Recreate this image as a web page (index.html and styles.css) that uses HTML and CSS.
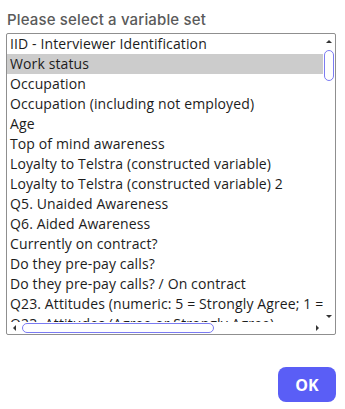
FILE: index.html
```html
<!DOCTYPE html>
<html>
<head>
<meta charset="utf-8">
<link rel="stylesheet" href="styles.css">
</head>
<body>
<div class="dialog">
  <div class="title">Please select a variable set</div>
  <div class="listbox">
    <div class="items">
      <div class="item">IID - Interviewer Identification</div>
      <div class="item selected">Work status</div>
      <div class="item">Occupation</div>
      <div class="item">Occupation (including not employed)</div>
      <div class="item">Age</div>
      <div class="item">Top of mind awareness</div>
      <div class="item">Loyalty to Telstra (constructed variable)</div>
      <div class="item">Loyalty to Telstra (constructed variable) 2</div>
      <div class="item">Q5. Unaided Awareness</div>
      <div class="item">Q6. Aided Awareness</div>
      <div class="item">Currently on contract?</div>
      <div class="item">Do they pre-pay calls?</div>
      <div class="item">Do they pre-pay calls? / On contract</div>
      <div class="item">Q23. Attitudes (numeric: 5 = Strongly Agree; 1 = Strongly Disagree)</div>
      <div class="item">Q23. Attitudes (Agree or Strongly Agree)</div>
    </div>
    <div class="vscroll">
      <span class="arrow up"></span>
      <div class="vtrack"><div class="vthumb"></div></div>
      <span class="arrow down"></span>
    </div>
    <div class="hscroll">
      <span class="arrow left"></span>
      <div class="htrack"><div class="hthumb"></div></div>
      <span class="arrow right"></span>
    </div>
    <div class="corner"></div>
  </div>
  <div class="actions">
    <button class="ok">OK</button>
  </div>
</div>
</body>
</html>
```
FILE: styles.css
```css
html, body {
  margin: 0;
  padding: 0;
  background: #ffffff;
}
.dialog {
  padding: 10px 9px 0 6px;
  width: 330px;
}
.title {
  font-family: "Inter", "Noto Sans", sans-serif;
  font-size: 15px;
  font-weight: 500;
  letter-spacing: 0.15px;
  color: #5a5a5a;
  line-height: 20px;
  height: 23px;
  padding-left: 1px;
}
.listbox {
  width: 328px;
  height: 300px;
  border: 1px solid #8f8f8f;
  border-radius: 2px;
  display: grid;
  grid-template-columns: 1fr 12px;
  grid-template-rows: 1fr 12px;
  overflow: hidden;
}
.items {
  grid-column: 1;
  grid-row: 1;
  overflow: hidden;
  font-family: "Open Sans", sans-serif;
  font-size: 14px;
  letter-spacing: 0.12px;
  color: #1c1c1c;
}
.item {
  height: 20px;
  line-height: 20px;
  padding-left: 3px;
  white-space: nowrap;
}
.item.selected {
  background: #cccccc;
}
.vscroll {
  grid-column: 2;
  grid-row: 1;
  display: flex;
  flex-direction: column;
  align-items: center;
  padding: 6px 0 4px;
}
.vtrack {
  flex: 1;
  width: 100%;
  padding-top: 7px;
}
.vthumb {
  width: 8px;
  height: 29px;
  margin-left: 1px;
  border: 1.5px solid #7b7bf2;
  border-radius: 6px;
  background: #ffffff;
}
.hscroll {
  grid-column: 1;
  grid-row: 2;
  display: flex;
  align-items: center;
  padding: 0 4px 0 6px;
}
.htrack {
  flex: 1;
  height: 100%;
  padding-left: 6px;
  display: flex;
  align-items: center;
}
.hthumb {
  width: 190px;
  height: 8px;
  border: 1.5px solid #7b7bf2;
  border-radius: 6px;
  background: #ffffff;
}
.corner {
  grid-column: 2;
  grid-row: 2;
}
.arrow {
  width: 0;
  height: 0;
  display: block;
}
.arrow.up {
  border-left: 3px solid transparent;
  border-right: 3px solid transparent;
  border-bottom: 3px solid #333;
}
.arrow.down {
  border-left: 3px solid transparent;
  border-right: 3px solid transparent;
  border-top: 3px solid #333;
}
.arrow.left {
  border-top: 3px solid transparent;
  border-bottom: 3px solid transparent;
  border-right: 3px solid #333;
}
.arrow.right {
  border-top: 3px solid transparent;
  border-bottom: 3px solid transparent;
  border-left: 3px solid #333;
}
.actions {
  display: flex;
  justify-content: flex-end;
  padding-top: 32px;
  padding-right: 0;
}
.ok {
  width: 58px;
  height: 35px;
  border: none;
  border-radius: 8px;
  background: #5a5ef6;
  color: #ffffff;
  font-family: "Open Sans", sans-serif;
  font-weight: 700;
  font-size: 16px;
  padding: 0;
}
```
